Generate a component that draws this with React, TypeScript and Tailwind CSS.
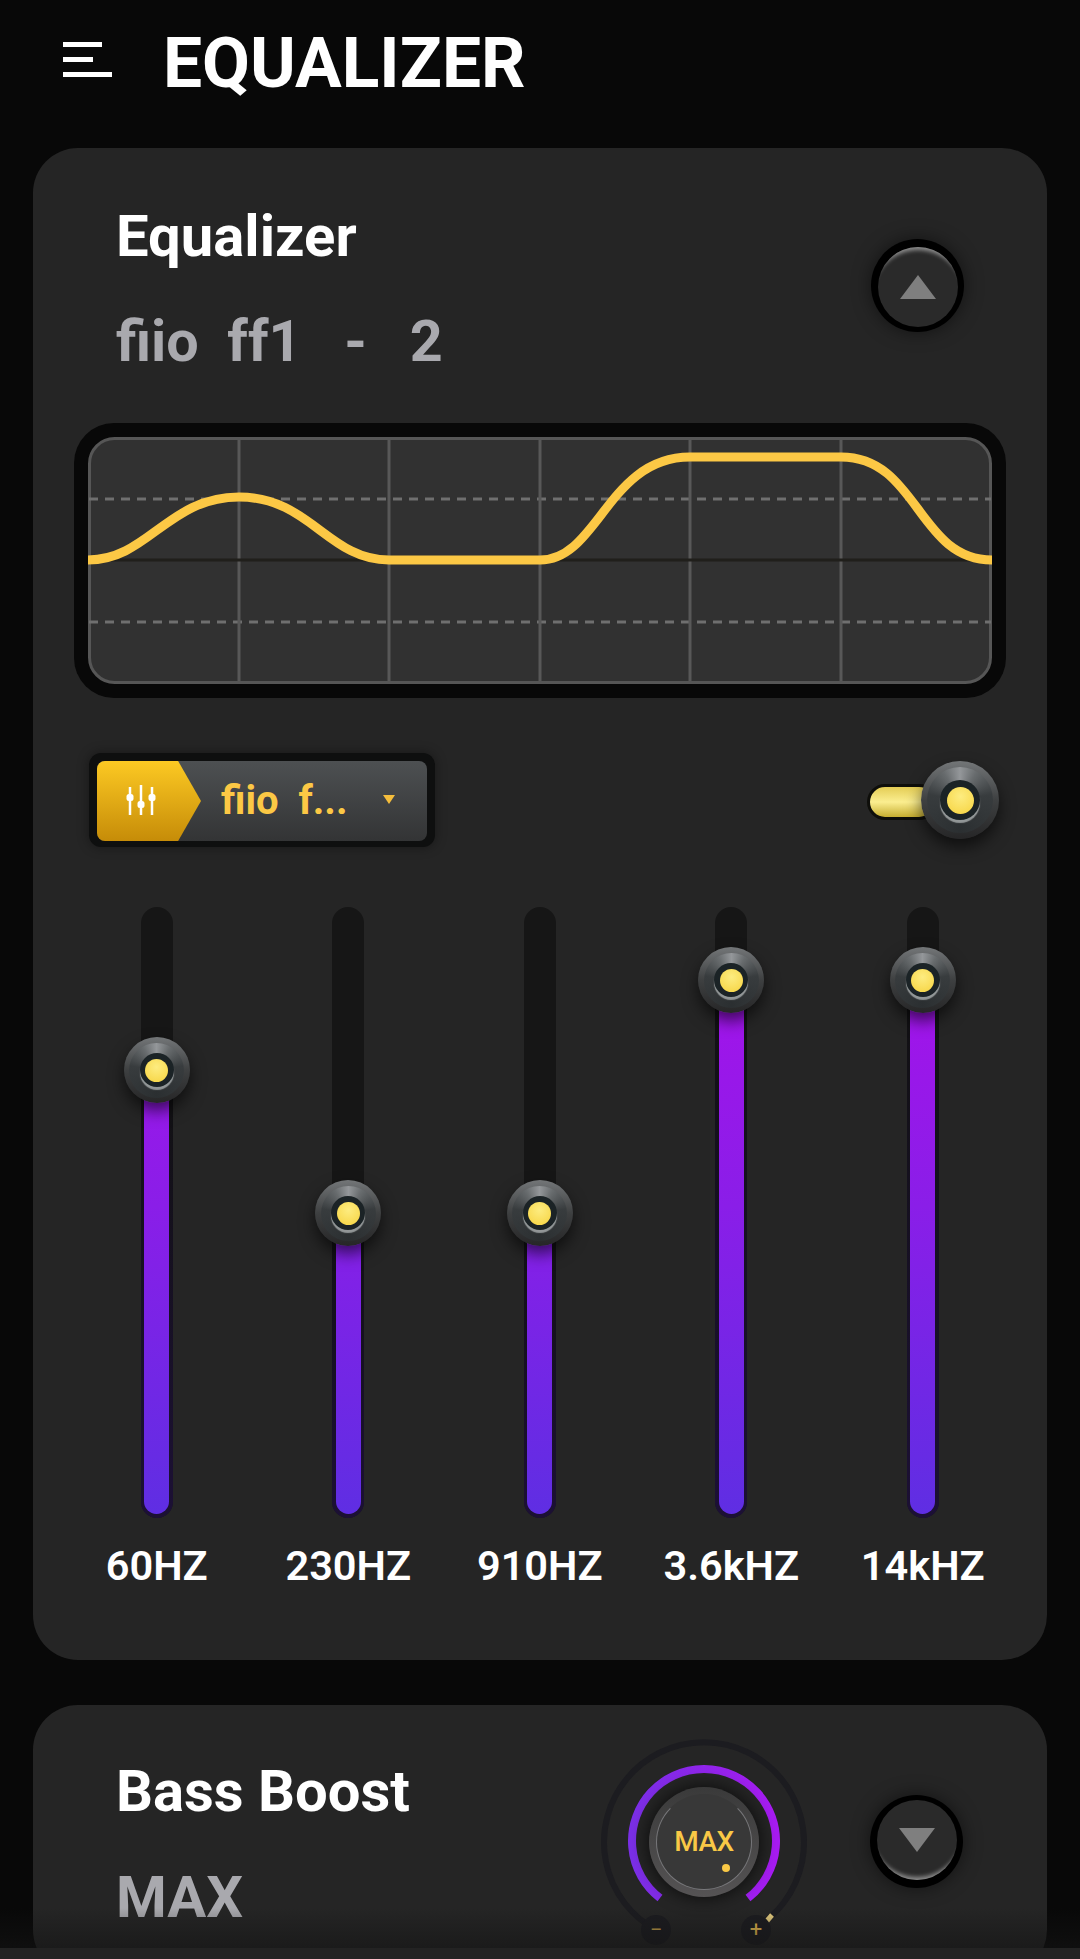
const font = "font-['Roboto',sans-serif]";

const bands = [
  { label: "60HZ", knobY: 163 },
  { label: "230HZ", knobY: 306 },
  { label: "910HZ", knobY: 306 },
  { label: "3.6kHZ", knobY: 73 },
  { label: "14kHZ", knobY: 73 },
];

function Knob({ size }: { size: "sm" | "lg" }) {
  const lg = size === "lg";
  return (
    <div
      className={`flex items-center justify-center rounded-full bg-[linear-gradient(180deg,#737678_0%,#3e4041_50%,#262627_100%)] shadow-[0_8px_16px_rgba(0,0,0,0.6)] ${
        lg ? "h-[78px] w-[78px]" : "h-[66px] w-[66px]"
      }`}
    >
      <div
        className={`flex items-center justify-center rounded-full bg-[conic-gradient(#94979a_0deg,#686c6e_30deg,#383c3e_80deg,#2b2f31_180deg,#383c3e_280deg,#686c6e_330deg,#94979a_360deg)] ${
          lg ? "h-[66px] w-[66px]" : "h-[55px] w-[55px]"
        }`}
      >
        <div
          className={`flex items-center justify-center rounded-full bg-[#1b2326] shadow-[0_3px_1px_rgba(215,220,220,0.6)] ${
            lg ? "h-[40px] w-[40px]" : "h-[34px] w-[34px]"
          }`}
        >
          <div
            className={`rounded-full bg-[radial-gradient(circle_at_50%_35%,#fdec80,#f6d33f)] ${
              lg ? "h-[27px] w-[27px]" : "h-[23px] w-[23px]"
            }`}
          />
        </div>
      </div>
    </div>
  );
}

function RoundButton({ dir }: { dir: "up" | "down" }) {
  const up = dir === "up";
  return (
    <div className="flex h-[93px] w-[93px] items-center justify-center rounded-full bg-black shadow-[0_0_18px_rgba(0,0,0,0.5)]">
      <div
        className={`flex h-[80px] w-[80px] items-center justify-center rounded-full bg-[#2a2a2a] ${
          up
            ? "mt-[2px] shadow-[inset_0_9px_4px_-6px_#8f8f8f]"
            : "mb-[4px] shadow-[inset_0_-9px_4px_-6px_#8f8f8f]"
        }`}
      >
        <svg width="38" height="26" viewBox="0 0 38 26">
          <path d={up ? "M19 1 37 25H1Z" : "M1 1H37L19 25Z"} fill="#7f7f7f" />
        </svg>
      </div>
    </div>
  );
}

function EqGraph() {
  return (
    <div className="mx-[41px] mt-[47px] rounded-[40px] bg-[#080808] p-[14px]">
      <svg width="904" height="247" viewBox="0 0 904 247" className="block">
        <rect x="1.5" y="1.5" width="901" height="244" rx="25" fill="#313131" stroke="#565656" strokeWidth="3" />
        <path d="M1 62H903M1 185H903" stroke="#6f6f6f" strokeWidth="3" strokeDasharray="9 7" />
        <path d="M151 3V244M301 3V244M452 3V244M602 3V244M753 3V244" stroke="#585858" strokeWidth="3" />
        <path d="M3 123H901" stroke="#201f1b" strokeWidth="3" />
        <path
          d="M0 123C60 123 80 60 151 60C222 60 240 123 301 123H452C510 123 520 20 602 20H753C830 20 830 123 904 123"
          fill="none"
          stroke="#fcc845"
          strokeWidth="9"
        />
      </svg>
    </div>
  );
}

function PresetSelect() {
  return (
    <div className="rounded-[12px] bg-[#0e0f0f] px-[8px] pt-[8px] pb-[6px] shadow-[0_0_12px_rgba(0,0,0,0.4)]">
      <div className="flex h-[80px] w-[330px] items-center rounded-[8px] bg-[linear-gradient(180deg,#4d5052,#333435)]">
        <div className="flex h-full w-[104px] items-center justify-center rounded-l-[8px] bg-[linear-gradient(180deg,#fcc923,#c68c08)] pr-[14px] [clip-path:polygon(0_0,78%_0,100%_50%,78%_100%,0_100%)]">
          <svg width="32" height="32" viewBox="0 0 32 32" fill="none" stroke="#fff" strokeWidth="2.5">
            <path d="M4 2V30M15 0V30M26 2V30" />
            <rect x="0.5" y="9" width="7" height="7" rx="2.5" fill="#fff" stroke="none" />
            <rect x="11.5" y="16" width="7" height="7" rx="2.5" fill="#fff" stroke="none" />
            <rect x="22.5" y="9" width="7" height="7" rx="2.5" fill="#fff" stroke="none" />
          </svg>
        </div>
        <span className="ml-[20px] w-[162px] text-[40px] leading-none font-bold whitespace-pre text-[#fcc845]">
          {"fiio  f..."}
        </span>
        <svg width="12" height="9" viewBox="0 0 12 9" className="mb-[4px]">
          <path d="M0 0H12L6 9Z" fill="#f4bd3c" />
        </svg>
      </div>
    </div>
  );
}

function Toggle() {
  return (
    <div className="flex items-center">
      <div className="mt-[4px] h-[36px] w-[70px] rounded-full border-[3px] border-[#0e0e0a] bg-[linear-gradient(180deg,#e4cd55,#fbee90_50%,#c7ae30)]" />
      <div className="-ml-[16px]">
        <Knob size="lg" />
      </div>
    </div>
  );
}

function Band({ label, knobY }: { label: string; knobY: number }) {
  return (
    <div className="flex w-[191.5px] flex-col items-center">
      <div className="relative h-[611px] w-[32px] rounded-full bg-[#161616]">
        <div
          className="absolute inset-x-0 bottom-0 rounded-b-full bg-[linear-gradient(180deg,#111111,#1c1035)]"
          style={{ top: knobY }}
        >
          {/* gradient stays fixed to the full track, the fill only reveals it */}
          <div className="absolute inset-x-[3.5px] top-0 bottom-[4px] overflow-hidden rounded-b-full">
            <div className="absolute inset-x-0 bottom-0 h-[560px] bg-[linear-gradient(180deg,#a612ea_0%,#8a1ee8_45%,#5f2ee3_100%)]" />
          </div>
        </div>
        <div className="absolute left-[-17px]" style={{ top: knobY - 33 }}>
          <Knob size="sm" />
        </div>
      </div>
      <span className="mt-[24px] text-[41.5px] leading-[48px] font-semibold whitespace-nowrap text-white">{label}</span>
    </div>
  );
}

function BassDial() {
  return (
    <div className="relative h-[212px] w-[212px]">
      <svg width="212" height="212" viewBox="0 0 212 212" className="absolute inset-0">
        <defs>
          <linearGradient id="arc" x1="0" x2="1" y1="0" y2="0">
            <stop offset="0" stopColor="#7a2fe6" />
            <stop offset="1" stopColor="#a81bf2" />
          </linearGradient>
        </defs>
        <path d="M58 194A100 100 0 1 1 154 194" fill="none" stroke="#1c1c20" strokeWidth="6" />
        <path d="M62 162A72 72 0 1 1 150 162" fill="none" stroke="url(#arc)" strokeWidth="8" />
        <path d="M168 186L174 179" stroke="#e8cf80" strokeWidth="5" />
      </svg>
      <div className="absolute top-[51px] left-[51px] flex h-[110px] w-[110px] items-center justify-center rounded-full bg-[linear-gradient(180deg,#3a3a3a,#555354)] shadow-[0_0_18px_rgba(0,0,0,0.75)]">
        <div className="relative flex h-[96px] w-[96px] items-center justify-center rounded-full border border-[#77777a] border-t-transparent bg-[#383838]">
          <span className="text-[28px] leading-none font-medium tracking-[-0.5px] text-[#f9c846]">MAX</span>
          <div className="absolute right-[21px] bottom-[17px] h-[8px] w-[8px] rounded-full bg-[#f9c846]" />
        </div>
      </div>
      <div className="absolute top-[179px] left-[43px] flex h-[30px] w-[30px] items-center justify-center rounded-full bg-[#1c1c20] text-[22px] leading-none text-[#c9a24a]">
        −
      </div>
      <div className="absolute top-[179px] left-[143px] flex h-[30px] w-[30px] items-center justify-center rounded-full bg-[#1c1c20] text-[22px] leading-none text-[#f0c050]">
        +
      </div>
    </div>
  );
}

export default function App() {
  return (
    <div className={`relative h-[1959px] w-[1080px] overflow-hidden bg-[#080808] ${font}`}>
      <header className="flex h-[148px] items-start pt-[28px] pl-[63px]">
        <div className="mt-[14px] flex w-[49px] flex-col gap-[10px]">
          <div className="h-[5px] w-[39px] bg-white" />
          <div className="h-[5px] w-[30px] bg-white" />
          <div className="h-[5px] w-[49px] bg-white" />
        </div>
        <h1 className="ml-[51px] text-[69.5px] leading-[72px] font-bold text-white">EQUALIZER</h1>
      </header>

      <section className="mx-[33px] rounded-[45px] bg-[#252525] pt-[54px] pb-[70px]">
        <div className="flex items-start justify-between pr-[83px] pl-[83px]">
          <div>
            <h2 className="text-[58px] leading-[68px] font-bold text-white">Equalizer</h2>
            <p className="mt-[38px] text-[57.5px] leading-[68px] font-bold whitespace-pre text-[#a9a9ae]">
              {"fiio  ff1   -   2"}
            </p>
          </div>
          <div className="mt-[37px]">
            <RoundButton dir="up" />
          </div>
        </div>

        <EqGraph />

        <div className="mt-[55px] flex items-center justify-between pr-[48px] pl-[56px]">
          <PresetSelect />
          <Toggle />
        </div>

        <div className="mt-[60px] flex pl-[28px]">
          {bands.map((b) => (
            <Band key={b.label} label={b.label} knobY={b.knobY} />
          ))}
        </div>
      </section>

      <section className="mx-[33px] mt-[45px] flex h-[270px] items-start rounded-[45px] bg-[#252525] pl-[83px]">
        <div className="w-[482px] pt-[52px]">
          <h2 className="text-[58px] leading-[68px] font-bold text-white">Bass Boost</h2>
          <p className="mt-[38px] text-[58px] leading-[68px] font-bold text-[#a9a9ae]">MAX</p>
        </div>
        <div className="mt-[31px]">
          <BassDial />
        </div>
        <div className="mt-[90px] ml-[60px]">
          <RoundButton dir="down" />
        </div>
      </section>

      <div className="absolute right-0 bottom-[11px] left-0 h-[40px] bg-[linear-gradient(180deg,rgba(20,20,20,0),rgba(20,20,20,0.6))]" />
      <div className="absolute right-0 bottom-0 left-0 h-[11px] bg-[#232323]" />
    </div>
  );
}
